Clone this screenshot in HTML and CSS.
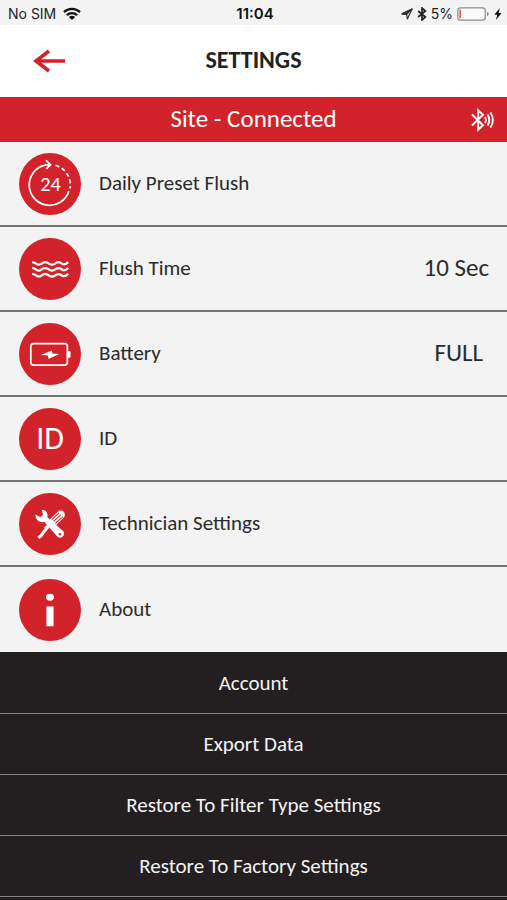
FILE: index.html
```
<!DOCTYPE html>
<html lang="en">
<head>
    <meta charset="UTF-8">
    <meta name="viewport" content="width=device-width, initial-scale=1.0">
    <title>Settings</title>
    <link rel="stylesheet" href="styles.css">
</head>
<body>
    <div class="status-bar">
        <div class="status-left">
            <span>No SIM</span>
            <svg width="18" height="14" viewBox="0 0 18 14" fill="none" stroke="#111" stroke-width="2.4">
                <path d="M1 5.2a11.4 11.4 0 0 1 16 0M3.9 8.2a7.3 7.3 0 0 1 10.2 0"/>
                <path d="M9 13L5.9 10a4.4 4.4 0 0 1 6.2 0z" fill="#111" stroke="none"/>
            </svg>
        </div>
        <span class="status-time">11:04</span>
        <div class="status-right">
            <svg width="12" height="12" viewBox="0 0 12 12" fill="none" stroke="#333" stroke-width="1.2" stroke-linejoin="round">
                <path d="M11 1L1 5.8l4.600.6L6.400 11z"/>
                <path d="M11 1L1 5.8l4.600.6z" fill="#333"/>
            </svg>
            <svg class="status-bluetooth" width="10" height="14" viewBox="0 0 10 14" fill="none" stroke="#222" stroke-width="1.7">
                <path d="M1.200 4l7.200 6L5 13V1l3.400 3-7.200 6"/>
            </svg>
            <span>5%</span>
            <svg width="33" height="14" viewBox="0 0 33 14">
                <rect x=".8" y=".8" width="27.4" height="12.4" rx="2.4" fill="#fafafa" stroke="#8d8d8d" stroke-width="1.2"/>
                <rect x="2.4" y="2.6" width="1.5" height="8.8" fill="#f0473e"/>
                <path d="M30 5v4q1.800-.5 1.800-2T30 5z" fill="#8d8d8d"/>
            </svg>
            <svg width="8" height="12" viewBox="0 0 8 12">
                <path d="M5.800 0L.4 6.800h2.800L2 12l5.600-7H4.600z" fill="#111"/>
            </svg>
        </div>
    </div>

    <header class="header">
        <button class="back" type="button" aria-label="Back">
            <svg width="34" height="24" viewBox="0 0 34 24" fill="none" stroke="#d2232a" stroke-width="3.6">
                <path d="M33 12H5M17 2L4 12l13 10"/>
            </svg>
        </button>
        <h1>SETTINGS</h1>
    </header>

    <div class="site-bar">
        <span class="site-name">Site - Connected</span>
        <svg class="site-signal" width="24" height="24" viewBox="0 0 24 24" fill="none" stroke="#fff" stroke-width="1.9">
            <path d="M1 6.500l11 10.800-4.800 4.500V2.200L12 6.700 1 17.500"/>
            <path d="M14 9q1.800 3 0 6M16.600 6.600q3.400 5.400 0 10.800M19.400 4.400q5 7.600 0 15.200"/>
        </svg>
    </div>

    <main>
        <ul class="settings">
            <li>
                <a class="setting" href="#flush">
                    <svg class="icon" viewBox="0 0 61 61" fill="none" stroke="#fff" stroke-width="1.7">
                        <circle class="icon-disc" cx="30.5" cy="30.5" r="30.5"/>
                        <path d="M49.100 37.500A20 20 0 1 1 29.500 11.400"/>
                        <path d="M26.500 7.200l4.600 4.300-4.200 4.100"/>
                        <path d="M36 12.200A20 20 0 0 1 50.200 35" stroke-dasharray="4 2.7"/>
                        <text class="icon-24" x="31" y="37">24</text>
                    </svg>
                    <span class="label">Daily Preset Flush</span>
                </a>
            </li>
            <li>
                <a class="setting" href="#time">
                    <svg class="icon" viewBox="0 0 61 61" fill="none" stroke="#fff" stroke-width="2.2">
                        <circle class="icon-disc" cx="30.5" cy="30.5" r="30.5"/>
                        <path d="M13 23.7q2.300.2 4.300 1.800 2.200 1.500 4.400 0l2-1.200q2.300-1.200 4.500.2l2 1.200q2.200 1.200 4.400 0l2-1.200q2.200-1.300 4.400 0l2 1.200q2 1 5.500-2"/>
                        <path d="M13 29.500q2.300.2 4.300 1.800 2.200 1.500 4.400 0l2-1.200q2.300-1.200 4.500.2l2 1.200q2.200 1.200 4.400 0l2-1.200q2.200-1.300 4.400 0l2 1.200q2 1 5.500-2"/>
                        <path d="M13 35.300q2.300.2 4.300 1.800 2.200 1.500 4.400 0l2-1.200q2.300-1.200 4.500.2l2 1.200q2.200 1.200 4.400 0l2-1.200q2.200-1.300 4.400 0l2 1.200q2 1 5.500-2"/>
                    </svg>
                    <span class="label">Flush Time</span>
                    <span class="value">10 Sec</span>
                </a>
            </li>
            <li>
                <a class="setting" href="#battery">
                    <svg class="icon" viewBox="0 0 61 61" fill="none" stroke="#fff" stroke-width="1.7">
                        <circle class="icon-disc" cx="30.5" cy="30.5" r="30.5"/>
                        <rect x="11.6" y="20.4" width="36" height="21" rx="2.8"/>
                        <path d="M48 27.500h1.400q1.300 0 1.300 1.400v4q0 1.400-1.300 1.400H48z" fill="#fff" stroke="none"/>
                        <path d="M21.500 31.500L32.300 27l.6 3 6.600.6-10.300 4.800-.8-3.400z" fill="#fff" stroke="none"/>
                    </svg>
                    <span class="label">Battery</span>
                    <span class="value value-full">FULL</span>
                </a>
            </li>
            <li>
                <a class="setting" href="#id">
                    <span class="icon icon-id">ID</span>
                    <span class="label">ID</span>
                </a>
            </li>
            <li>
                <a class="setting" href="#technician">
                    <svg class="icon" viewBox="0 0 61 61" fill="none">
                        <circle class="icon-disc" cx="30.5" cy="30.5" r="30.5"/>
                        <!-- screwdriver -->
                        <path d="M26 36L21.500 42.200 19 44" stroke="#fff" stroke-width="3"/>
                        <path d="M24.500 34l3-2.500 2.500 2.500-3.500 4z" fill="#fff"/>
                        <path d="M33.400 28.800L41 21.400" stroke="#fff" stroke-width="8.4" stroke-linecap="round"/>
                        <path d="M32.300 26.200l7.200-6.600M34 28l7.400-6.800M35.800 30l7.400-6.800" stroke="#d2232a" stroke-width="1"/>
                        <!-- wrench -->
                        <path d="M16.200 21.200l4.800 2.500 2.700-2.300-1.400-4.900c3.800-.2 6.700 3.200 5.600 7.400l15.200 13.300a3.900 3.900 0 0 1-5.200 5.800L24.700 28.400c-4.700 1.300-8.800-2.300-8.500-7.200z" fill="#fff"/>
                        <circle cx="40.3" cy="40.5" r="1.2" fill="#d2232a"/>
                    </svg>
                    <span class="label">Technician Settings</span>
                </a>
            </li>
            <li>
                <a class="setting" href="#about">
                    <svg class="icon" viewBox="0 0 61 61" fill="#fff">
                        <circle class="icon-disc" cx="30.5" cy="30.5" r="30.5"/>
                        <ellipse cx="30.5" cy="18" rx="3.9" ry="3.4"/>
                        <rect x="27" y="27" width="7" height="19.5"/>
                    </svg>
                    <span class="label">About</span>
                </a>
            </li>
        </ul>

        <nav class="menu">
            <a href="#account">Account</a>
            <a href="#export">Export Data</a>
            <a href="#restore-filter">Restore To Filter Type Settings</a>
            <a href="#restore-factory">Restore To Factory Settings</a>
        </nav>
    </main>
</body>
</html>
```

FILE: styles.css
```
* {
    box-sizing: border-box;
}

body {
    margin: 0;
    min-height: 100vh;
    background-color: #231f20;
    font-family: Carlito, Lato, sans-serif;
    color: #2b2b2b;
}

a {
    color: inherit;
    text-decoration: none;
}

svg {
    display: block;
}

/* Status bar */
.status-bar {
    display: grid;
    grid-template-columns: 1fr auto 1fr;
    align-items: center;
    height: 25px;
    padding: 2px 5px 0 8px;
    background-color: #f3f3f3;
    font-family: Inter, sans-serif;
    font-size: 14px;
    color: #222;
}

.status-left,
.status-right {
    display: flex;
    align-items: center;
    gap: 7px;
}

.status-right {
    justify-content: flex-end;
    gap: 4px;
}

.status-time {
    font-size: 15px;
    font-weight: 600;
    color: #111;
}

/* Title */
.header {
    display: grid;
    grid-template-columns: 1fr auto 1fr;
    align-items: center;
    height: 72px;
    padding: 0 32px;
    background-color: #fff;
}

.back {
    justify-self: start;
    padding: 0;
    border: none;
    background: none;
    cursor: pointer;
}

h1 {
    margin: 0;
    padding-bottom: 2px;
    font-size: 24px;
    line-height: 28px;
    color: #222;
}

/* Connection */
.site-bar {
    display: grid;
    grid-template-columns: 1fr auto 1fr;
    align-items: center;
    height: 45px;
    padding: 0 12px;
    background-color: #d2232a;
    color: #fff;
}

.site-name {
    grid-column: 2;
    padding-bottom: 2px;
    font-size: 25px;
    line-height: 28px;
}

.site-signal {
    justify-self: end;
}

/* Settings list */
.settings {
    margin: 0;
    padding: 0;
    list-style: none;
    background-color: #f3f3f3;
}

.setting {
    display: flex;
    align-items: center;
    height: 85px;
    padding: 0 18px 0 19px;
    border-bottom: 2px solid #747474;
}

.settings li:last-child .setting {
    border-bottom: none;
}

.icon {
    flex: none;
    width: 62px;
    height: 62px;
    margin-right: 18px;
}

.icon-disc {
    fill: #d2232a;
    stroke: none;
}

.icon-24 {
    fill: #fff;
    stroke: none;
    font-size: 20px;
    text-anchor: middle;
}

.icon-id {
    display: flex;
    align-items: center;
    justify-content: center;
    border-radius: 50%;
    background-color: #d2232a;
    color: #fff;
    font-size: 32px;
}

.label {
    padding-bottom: 2px;
    font-size: 21px;
    line-height: 24px;
}

.value {
    margin-left: auto;
    padding-bottom: 2px;
    font-size: 25px;
    line-height: 28px;
}

.value-full {
    padding-right: 6px;
}

/* Bottom menu */
.menu {
    padding-top: 1px;
    background-color: #231f20;
}

.menu a {
    display: flex;
    align-items: center;
    justify-content: center;
    height: 61px;
    border-bottom: 1px solid #858384;
    color: #f3f3f3;
    font-size: 21px;
}
```
